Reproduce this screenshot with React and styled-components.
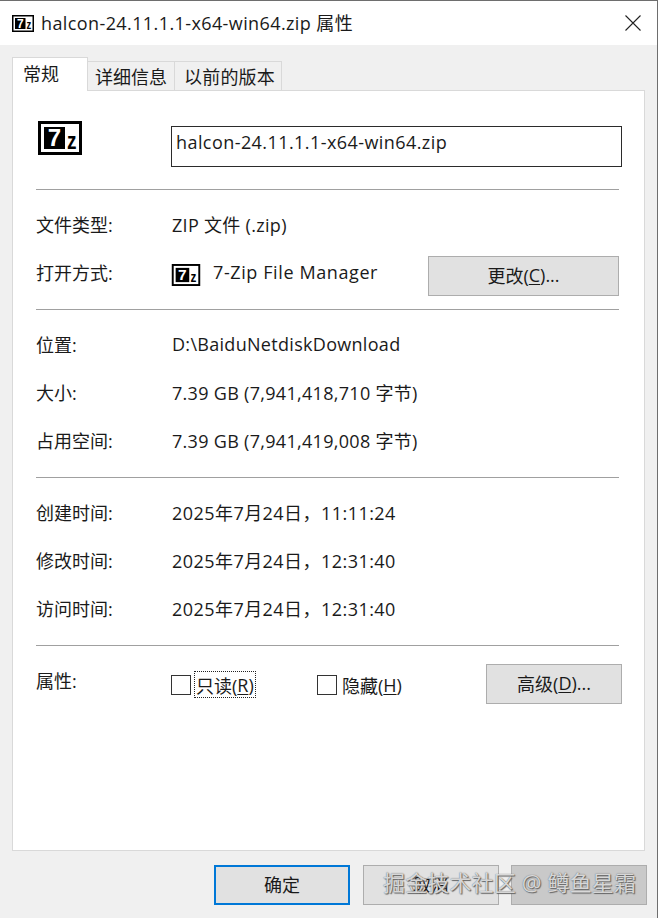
import React from "react";
import styled, { createGlobalStyle } from "styled-components";

const Global = createGlobalStyle`
  html, body { margin: 0; padding: 0; background: #fff; }
  * { box-sizing: border-box; }
  body { font-family: "Open Sans", "Noto Sans CJK SC", sans-serif; font-size: 18px; color: #1a1a1a; }
`;

const Page = styled.div`
  position: relative;
  width: 660px;
  height: 918px;
  overflow: hidden;
  background: #fff;
`;
const Win = styled.div`
  width: 658px;
  height: 918px;
  border-top: 1px solid #6e6e6e;
  border-right: 1px solid #6e6e6e;
  display: flex;
  flex-direction: column;
  background: #f0f0f0;
`;
const TitleBar = styled.div`
  height: 44px;
  flex: none;
  background: #fff;
  display: flex;
  align-items: center;
  padding: 0 16px 0 12px;
  gap: 7px;
`;
const TitleText = styled.div`
  flex: 1;
  font-size: 18px;
  letter-spacing: 0.4px;
  white-space: nowrap;
  padding-bottom: 2px;
`;
const Body = styled.div`
  flex: 1;
  display: flex;
  flex-direction: column;
  padding: 12px 12px 0 12px;
`;
const Tabs = styled.div`
  height: 34px;
  display: flex;
  align-items: flex-end;
  position: relative;
  z-index: 1;
  margin-bottom: -1px;
`;
const Tab = styled.div`
  height: ${(p) => (p.$active ? "34px" : "30px")};
  width: ${(p) => p.$w}px;
  background: ${(p) => (p.$active ? "#fff" : "#f0f0f0")};
  border: 1px solid #d9d9d9;
  border-bottom: ${(p) => (p.$active ? "none" : "1px solid #d9d9d9")};
  border-left: ${(p) => (p.$active ? "1px solid #d9d9d9" : "none")};
  display: flex;
  align-items: center;
  justify-content: flex-start;
  font-size: 18px;
  padding: 0 0 ${(p) => (p.$active ? "4px" : "0")} ${(p) => p.$pad}px;
  letter-spacing: ${(p) => p.$ls || 0}px;
  white-space: nowrap;
`;
const Panel = styled.div`
  height: 761px;
  background: #fff;
  border: 1px solid #d9d9d9;
  padding: 0 25px 0 23px;
`;
const Header = styled.div`
  height: 98px;
  display: grid;
  grid-template-columns: 135px 451px;
  align-items: start;
  padding-top: 30px;
`;
const BigIcon = styled.div`
  margin-left: 2px;
  height: 34px;
`;
const NameInput = styled.div`
  margin-top: 5px;
  height: 41px;
  border: 1px solid #2b2b2b;
  padding: 0 0 9px 4px;
  display: flex;
  align-items: center;
  letter-spacing: 0.43px;
  white-space: nowrap;
`;
const Section = styled.section`
  border-top: 1px solid #a0a0a0;
  padding: 11px 0 12px;
`;
const Row = styled.div`
  height: 48px;
  display: grid;
  grid-template-columns: 136px 1fr auto;
  align-items: center;
`;
const Label = styled.span`
  padding-bottom: 2px;
`;
const Value = styled.div`
  display: flex;
  align-items: center;
  white-space: nowrap;
  padding-bottom: 2px;
  letter-spacing: ${(p) => p.$ls ?? 0.3}px;
`;
const OpenIcon = styled.span`
  display: flex;
  margin: 6px 12px 0 -1px;
`;
const Button = styled.div`
  height: 40px;
  width: ${(p) => p.$w || 136}px;
  background: ${(p) => p.$bg || "#e1e1e1"};
  border: ${(p) => (p.$primary ? "2px solid #0078d7" : "1px solid #adadad")};
  display: flex;
  align-items: center;
  justify-content: center;
  font-size: 18px;
  padding-bottom: 2px;
  white-space: nowrap;
`;
const ChangeButton = styled(Button)`
  margin-top: 6px;
`;
const AdvancedButton = styled(Button)`
  margin: 6px -3px 0 0;
`;
const Checks = styled.div`
  display: flex;
  align-items: center;
  margin: 7px 0 0 -1px;
`;
const Check = styled.div`
  display: flex;
  align-items: center;
  width: ${(p) => p.$w}px;
`;
const Box = styled.span`
  flex: none;
  width: 20px;
  height: 20px;
  border: 1px solid #333;
  background: #fff;
`;
const CheckLabel = styled.span`
  margin-left: 4px;
  height: 25px;
  padding: 0 1px;
  display: flex;
  align-items: center;
  white-space: nowrap;
  outline: ${(p) => (p.$focus ? "1px dotted #222" : "none")};
`;
const U = styled.span`
  text-decoration: underline;
  text-underline-offset: 2px;
  text-decoration-thickness: 1px;
`;
const Footer = styled.div`
  display: flex;
  justify-content: flex-end;
  padding: 14px 0 0 0;
  margin-right: -2px;
`;
const OkButton = styled(Button)`
  margin-right: 13px;
`;
const CancelButton = styled(Button)`
  margin-right: 12px;
`;
const Mark = styled.div`
  position: absolute;
  left: 383px;
  top: 867px;
  font-size: 22px;
  line-height: 30px;
  letter-spacing: 0.15px;
  color: rgba(255, 255, 255, 0.75);
  text-shadow: 0 0 1px #555, 1px 1px 1px #666;
  white-space: nowrap;
`;

const SevenZip = ({ w, h }) => (
  <svg width={w} height={h} viewBox="0 0 44 34" style={{ display: "block" }}>
    <rect width="44" height="34" fill="#000" />
    <rect x="3" y="3" width="38" height="28" fill="#fff" />
    <rect x="6" y="6" width="21" height="22" fill="#000" />
    <text x="16.5" y="25" textAnchor="middle" fontFamily="Liberation Sans" fontWeight="700" fontSize="24" fill="#fff">7</text>
    <text x="29" y="28" textLength="9.5" lengthAdjust="spacingAndGlyphs" fontFamily="Liberation Sans" fontWeight="700" fontSize="24" fill="#000">z</text>
  </svg>
);

const Close = () => (
  <svg width="16" height="16" viewBox="0 0 16 16" style={{ display: "block" }}>
    <path d="M0.5 0.5L15.5 15.5M15.5 0.5L0.5 15.5" stroke="#222" strokeWidth="1.1" fill="none" />
  </svg>
);

export default function App() {
  return (
    <Page>
      <Global />
      <Win>
        <TitleBar>
          <SevenZip w={22} h={17} />
          <TitleText>halcon-24.11.1.1-x64-win64.zip 属性</TitleText>
          <Close />
        </TitleBar>
        <Body>
          <Tabs>
            <Tab $active $w={76} $pad={10}>常规</Tab>
            <Tab $w={87} $pad={7}>详细信息</Tab>
            <Tab $w={107} $pad={9} $ls={0.2}>以前的版本</Tab>
          </Tabs>
          <Panel>
            <Header>
              <BigIcon><SevenZip w={44} h={34} /></BigIcon>
              <NameInput>halcon-24.11.1.1-x64-win64.zip</NameInput>
            </Header>
            <Section>
              <Row><Label>文件类型:</Label><Value>ZIP 文件 (.zip)</Value></Row>
              <Row>
                <Label>打开方式:</Label>
                <Value $ls={0.6}>
                  <OpenIcon><SevenZip w={30} h={22} /></OpenIcon>
                  <span>7-Zip File Manager</span>
                </Value>
                <ChangeButton $w={191}>更改(<U>C</U>)...</ChangeButton>
              </Row>
            </Section>
            <Section>
              <Row><Label>位置:</Label><Value>D:\BaiduNetdiskDownload</Value></Row>
              <Row><Label>大小:</Label><Value>7.39 GB (7,941,418,710 字节)</Value></Row>
              <Row><Label>占用空间:</Label><Value>7.39 GB (7,941,419,008 字节)</Value></Row>
            </Section>
            <Section>
              <Row><Label>创建时间:</Label><Value $ls={0.45}>2025年7月24日，11:11:24</Value></Row>
              <Row><Label>修改时间:</Label><Value $ls={0.45}>2025年7月24日，12:31:40</Value></Row>
              <Row><Label>访问时间:</Label><Value $ls={0.45}>2025年7月24日，12:31:40</Value></Row>
            </Section>
            <Section>
              <Row>
                <Label>属性:</Label>
                <Checks>
                  <Check $w={146}><Box /><CheckLabel $focus>只读(<U>R</U>)</CheckLabel></Check>
                  <Check $w={100}><Box /><CheckLabel>隐藏(<U>H</U>)</CheckLabel></Check>
                </Checks>
                <AdvancedButton>高级(<U>D</U>)...</AdvancedButton>
              </Row>
            </Section>
          </Panel>
          <Footer>
            <OkButton $primary>确定</OkButton>
            <CancelButton>取消</CancelButton>
            <Button $bg="#c9c9c9" />
          </Footer>
        </Body>
      </Win>
      <Mark>掘金技术社区 @ 鳟鱼星霜</Mark>
    </Page>
  );
}
